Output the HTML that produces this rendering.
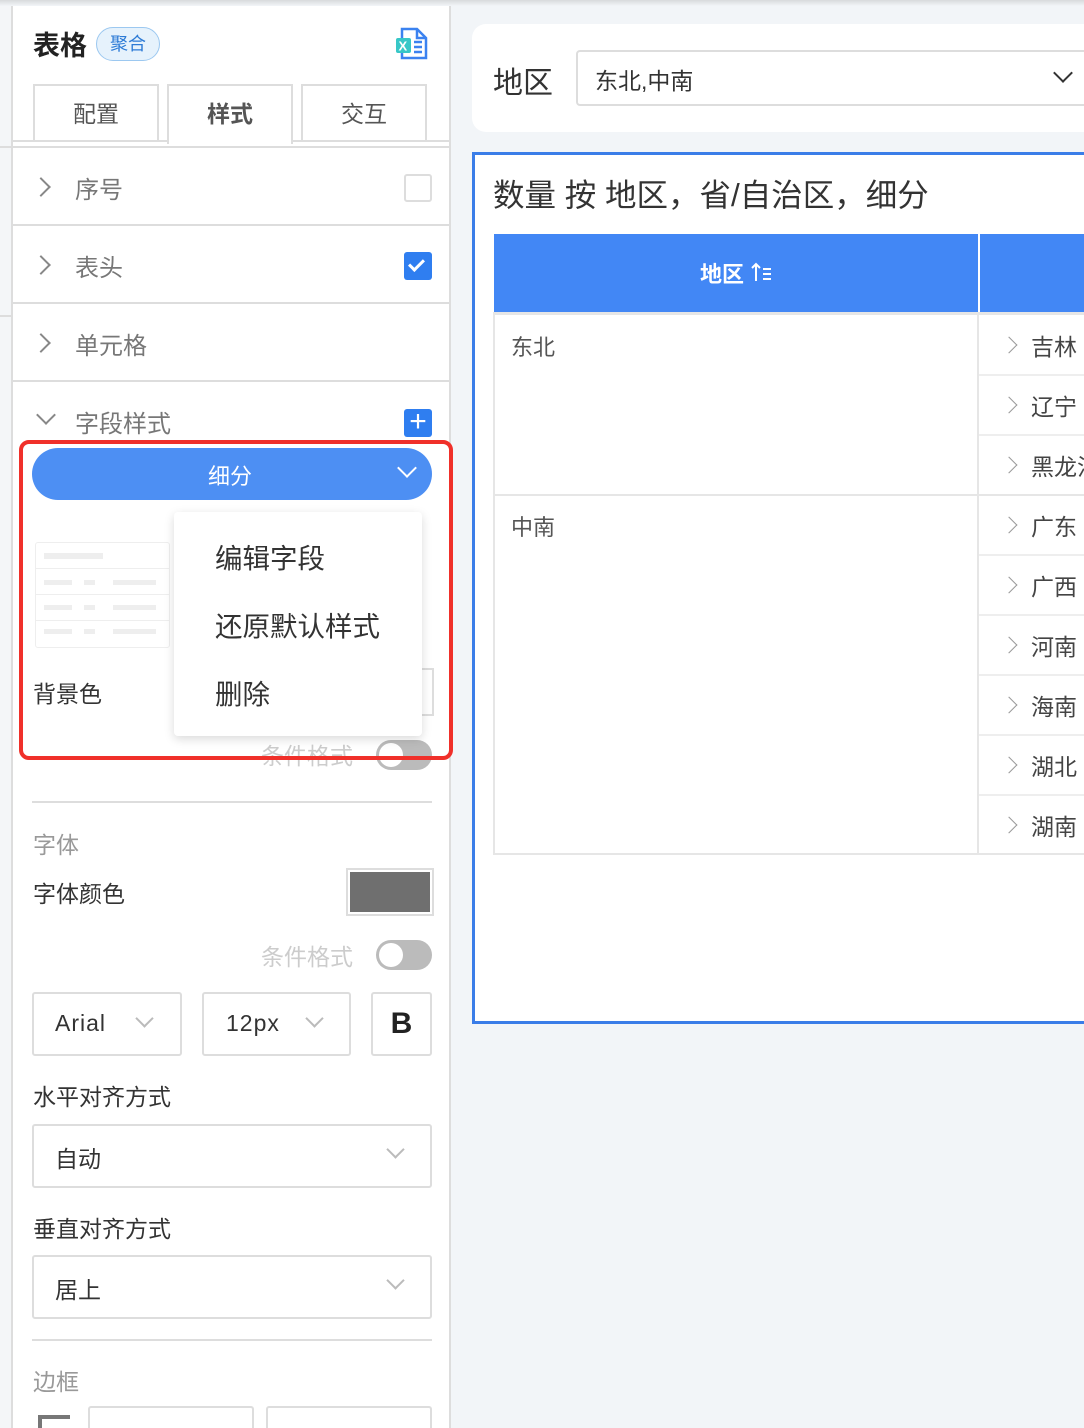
<!DOCTYPE html>
<html><head><meta charset="utf-8"><style>
*{box-sizing:border-box;margin:0;padding:0}
html,body{width:1084px;height:1428px;overflow:hidden}
body{background:#f2f5f8;font-family:"Liberation Sans","Noto Sans CJK SC",sans-serif;position:relative;color:#333}
.a{position:absolute}
.t{position:absolute;white-space:nowrap}
.chev{position:absolute;width:14px;height:14px;border-right:2px solid #888;border-bottom:2px solid #888}
.sc{position:absolute;left:1003px;width:12px;height:12px;border-right:1.5px solid #999;border-bottom:1.5px solid #999;transform:rotate(-45deg)}
.st{position:absolute;left:1031px;font-size:23px;color:#444;white-space:nowrap}
</style></head><body>
<div class="a" style="left:0;top:0;width:11px;height:1428px;background:#f4f6f8"></div>
<div class="a" style="left:0;top:146px;width:11px;height:2px;background:#ddd"></div>
<div class="a" style="left:0;top:315px;width:11px;height:2px;background:#ddd"></div>
<div class="a" style="left:11px;top:0;width:440px;height:1428px;background:#fff;border-left:2px solid #ddd;border-right:2px solid #ddd"></div>
<div class="a" style="left:0;top:0;width:1084px;height:6px;background:linear-gradient(#d8dadc,#f2f5f8)"></div>
<div class="t" style="left:33px;top:24px;font-size:27px;font-weight:bold;color:#222">表格</div>
<div class="t" style="left:96px;top:27px;width:64px;height:34px;border:1px solid #9cc8f0;background:#e6f2fc;border-radius:17px;color:#2d7bd6;font-size:18px;line-height:32px;text-align:center">聚合</div>
<svg class="a" style="left:394px;top:27px" width="36" height="34" viewBox="0 0 36 34"><path d="M8 2h15l9 9v20H8z" fill="#fff" stroke="#3b82f0" stroke-width="2.5"/><path d="M23 2v9h9" fill="none" stroke="#3b82f0" stroke-width="2.5"/><rect x="2" y="11" width="15" height="15" rx="2" fill="#37c7c7"/><text x="4.5" y="23.5" font-size="13" font-weight="bold" fill="#fff" font-family="Liberation Sans">X</text><path d="M20 15h8M20 20h8M20 25h8" stroke="#3b82f0" stroke-width="2.5"/></svg>
<div class="a" style="left:11px;top:140px;width:440px;height:8px;border-top:2px solid #ddd;border-bottom:2px solid #ddd"></div>
<div class="t" style="left:33px;top:84px;width:126px;height:56px;border:2px solid #ddd;border-bottom:none;background:#fff;font-size:23px;color:#555;text-align:center;line-height:56px">配置</div>
<div class="t" style="left:167px;top:84px;width:126px;height:60px;border:2px solid #ddd;border-bottom:none;background:#fff;font-size:23px;color:#555;font-weight:bold;text-align:center;line-height:56px">样式</div>
<div class="t" style="left:301px;top:84px;width:126px;height:56px;border:2px solid #ddd;border-bottom:none;background:#fff;font-size:23px;color:#555;text-align:center;line-height:56px">交互</div>
<div class="chev" style="left:34px;top:180px;transform:rotate(-45deg)"></div>
<div class="t" style="left:75px;top:170px;font-size:24px;color:#777">序号</div>
<div class="a" style="left:404px;top:174px;width:28px;height:28px;border:2px solid #ddd;border-radius:3px"></div>
<div class="a" style="left:11px;top:224px;width:440px;height:2px;background:#ddd"></div>
<div class="chev" style="left:34px;top:258px;transform:rotate(-45deg)"></div>
<div class="t" style="left:75px;top:248px;font-size:24px;color:#777">表头</div>
<div class="a" style="left:404px;top:252px;width:28px;height:28px;background:#2f7ef0;border-radius:3px"></div>
<div class="a" style="left:412px;top:256px;width:9px;height:15px;border-right:3px solid #fff;border-bottom:3px solid #fff;transform:rotate(45deg)"></div>
<div class="a" style="left:11px;top:302px;width:440px;height:2px;background:#ddd"></div>
<div class="chev" style="left:34px;top:336px;transform:rotate(-45deg)"></div>
<div class="t" style="left:75px;top:326px;font-size:24px;color:#777">单元格</div>
<div class="a" style="left:11px;top:380px;width:440px;height:2px;background:#ddd"></div>
<div class="chev" style="left:39px;top:408px;transform:rotate(45deg)"></div>
<div class="t" style="left:75px;top:404px;font-size:24px;color:#777">字段样式</div>
<div class="a" style="left:404px;top:409px;width:28px;height:28px;background:#2f7ef0;border-radius:3px;color:#fff;font-size:30px;line-height:26px;text-align:center;font-weight:300">+</div>
<div class="a" style="left:32px;top:448px;width:400px;height:52px;background:#4d8ff3;border-radius:26px"></div>
<div class="t" style="left:208px;top:459px;font-size:22px;color:#fff">细分</div>
<div class="a" style="left:400px;top:461px;width:14px;height:14px;border-right:2px solid #fff;border-bottom:2px solid #fff;transform:rotate(45deg)"></div>
<div class="a" style="left:35px;top:542px;width:135px;height:106px;border:1px solid #eee;border-radius:3px"></div>
<div class="a" style="left:44px;top:553px;width:59px;height:6px;background:#eee"></div>
<div class="a" style="left:35px;top:568px;width:135px;height:1px;background:#eee"></div>
<div class="a" style="left:35px;top:594px;width:135px;height:1px;background:#eee"></div>
<div class="a" style="left:35px;top:620px;width:135px;height:1px;background:#eee"></div>
<div class="a" style="left:44px;top:580px;width:28px;height:5px;background:#eee;box-shadow:0 25px 0 #eee,0 49px 0 #eee"></div>
<div class="a" style="left:84px;top:580px;width:11px;height:5px;background:#eee;box-shadow:0 25px 0 #eee,0 49px 0 #eee"></div>
<div class="a" style="left:113px;top:580px;width:43px;height:5px;background:#eee;box-shadow:0 25px 0 #eee,0 49px 0 #eee"></div>
<div class="t" style="left:33px;top:675px;font-size:23px;color:#333">背景色</div>
<div class="a" style="left:346px;top:668px;width:88px;height:48px;border:2px solid #ddd"></div>
<div class="t" style="left:261px;top:737px;font-size:23px;color:#ccc">条件格式</div>
<div class="a" style="left:376px;top:740px;width:56px;height:30px;border-radius:15px;background:#bbb"></div>
<div class="a" style="left:379px;top:743px;width:24px;height:24px;border-radius:12px;background:#fff"></div>
<div class="a" style="left:174px;top:512px;width:248px;height:224px;background:#fff;border-radius:4px;box-shadow:0 3px 10px rgba(0,0,0,.15)"></div>
<div class="t" style="left:215px;top:536px;font-size:27.5px;color:#333">编辑字段</div>
<div class="t" style="left:215px;top:604px;font-size:27.5px;color:#333">还原默认样式</div>
<div class="t" style="left:215px;top:672px;font-size:27.5px;color:#333">删除</div>
<div class="a" style="left:19px;top:440px;width:434px;height:320px;border:4px solid #f0302a;border-radius:10px"></div>
<div class="a" style="left:32px;top:801px;width:400px;height:2px;background:#ddd"></div>
<div class="t" style="left:33px;top:826px;font-size:23px;color:#999">字体</div>
<div class="t" style="left:33px;top:875px;font-size:23px;color:#333">字体颜色</div>
<div class="a" style="left:346px;top:868px;width:88px;height:48px;border:2px solid #ddd;padding:2px"><div style="width:100%;height:100%;background:#6f6f6f"></div></div>
<div class="t" style="left:261px;top:938px;font-size:23px;color:#ccc">条件格式</div>
<div class="a" style="left:376px;top:940px;width:56px;height:30px;border-radius:15px;background:#bbb"></div>
<div class="a" style="left:379px;top:943px;width:24px;height:24px;border-radius:12px;background:#fff"></div>
<div class="a" style="left:32px;top:992px;width:150px;height:64px;border:2px solid #ddd;border-radius:3px"></div>
<div class="t" style="left:55px;top:1010px;font-size:23px;color:#333;letter-spacing:1px">Arial</div>
<div class="a" style="left:138px;top:1012px;width:13px;height:13px;border-right:2px solid #bbb;border-bottom:2px solid #bbb;transform:rotate(45deg)"></div>
<div class="a" style="left:202px;top:992px;width:149px;height:64px;border:2px solid #ddd;border-radius:3px"></div>
<div class="t" style="left:226px;top:1010px;font-size:23px;color:#333;letter-spacing:1px">12px</div>
<div class="a" style="left:308px;top:1012px;width:13px;height:13px;border-right:2px solid #bbb;border-bottom:2px solid #bbb;transform:rotate(45deg)"></div>
<div class="a" style="left:371px;top:992px;width:61px;height:64px;border:2px solid #ddd;border-radius:3px;text-align:center;font-size:30px;font-weight:bold;line-height:60px;color:#222">B</div>
<div class="t" style="left:33px;top:1078px;font-size:23px;color:#333">水平对齐方式</div>
<div class="a" style="left:32px;top:1124px;width:400px;height:64px;border:2px solid #ddd;border-radius:3px"></div>
<div class="t" style="left:55px;top:1140px;font-size:23px;color:#333">自动</div>
<div class="a" style="left:389px;top:1143px;width:13px;height:13px;border-right:2px solid #bbb;border-bottom:2px solid #bbb;transform:rotate(45deg)"></div>
<div class="t" style="left:33px;top:1210px;font-size:23px;color:#333">垂直对齐方式</div>
<div class="a" style="left:32px;top:1255px;width:400px;height:64px;border:2px solid #ddd;border-radius:3px"></div>
<div class="t" style="left:55px;top:1271px;font-size:23px;color:#333">居上</div>
<div class="a" style="left:389px;top:1274px;width:13px;height:13px;border-right:2px solid #bbb;border-bottom:2px solid #bbb;transform:rotate(45deg)"></div>
<div class="a" style="left:32px;top:1339px;width:400px;height:2px;background:#ddd"></div>
<div class="t" style="left:33px;top:1363px;font-size:23px;color:#999">边框</div>
<div class="a" style="left:38px;top:1415px;width:32px;height:13px;border-left:4px solid #777;border-top:4px solid #777"></div>
<div class="a" style="left:88px;top:1406px;width:166px;height:30px;border:2px solid #ddd;border-bottom:none;border-radius:3px 3px 0 0"></div>
<div class="a" style="left:266px;top:1406px;width:166px;height:30px;border:2px solid #ddd;border-bottom:none;border-radius:3px 3px 0 0"></div>
<div class="a" style="left:472px;top:24px;width:640px;height:108px;background:#fff;border-radius:14px"></div>
<div class="t" style="left:493px;top:58px;font-size:30px;color:#333">地区</div>
<div class="a" style="left:576px;top:50px;width:530px;height:56px;border:2px solid #ddd;border-radius:4px"></div>
<div class="t" style="left:595px;top:62px;font-size:23px;color:#333">东北,中南</div>
<div class="a" style="left:1056px;top:66px;width:14px;height:14px;border-right:2px solid #333;border-bottom:2px solid #333;transform:rotate(45deg)"></div>
<div class="a" style="left:472px;top:152px;width:640px;height:872px;background:#fff;border:3px solid #3a7de8"></div>
<div class="t" style="left:493px;top:170px;font-size:31.5px;color:#333">数量 按 地区，省/自治区，细分</div>
<div class="a" style="left:494px;top:234px;width:484px;height:78px;background:#4287f5"></div>
<div class="a" style="left:980px;top:234px;width:110px;height:78px;background:#4287f5"></div>
<div class="t" style="left:700px;top:257px;font-size:22px;color:#fff;font-weight:bold">地区</div>
<svg class="a" style="left:751px;top:261px" width="22" height="22" viewBox="0 0 22 22"><path d="M5 20V3M1 7l4-4 4 4" fill="none" stroke="#fff" stroke-width="2"/><path d="M12 8h8M12 13h8M12 18h8" stroke="#fff" stroke-width="2"/></svg>
<div class="a" style="left:493px;top:312px;width:600px;height:543px;border:2px solid #e6e6e6;border-top:3px solid #e6e6e6"></div>
<div class="a" style="left:977px;top:312px;width:2px;height:543px;background:#e6e6e6"></div>
<div class="a" style="left:493px;top:494px;width:486px;height:2px;background:#e6e6e6"></div>
<div class="t" style="left:511px;top:330px;font-size:22px;color:#555">东北</div>
<div class="t" style="left:511px;top:510px;font-size:22px;color:#555">中南</div>
<div class="a" style="left:979px;top:374px;width:110px;height:2px;background:#eee;box-shadow:0 60px 0 #eee,0 120px 0 #e6e6e6,0 180px 0 #eee,0 240px 0 #eee,0 300px 0 #eee,0 360px 0 #eee,0 420px 0 #eee"></div>
<div class="sc" style="top:339px"></div><div class="st" style="top:328px">吉林</div>
<div class="sc" style="top:399px"></div><div class="st" style="top:388px">辽宁</div>
<div class="sc" style="top:459px"></div><div class="st" style="top:448px">黑龙江</div>
<div class="sc" style="top:519px"></div><div class="st" style="top:508px">广东</div>
<div class="sc" style="top:579px"></div><div class="st" style="top:568px">广西</div>
<div class="sc" style="top:639px"></div><div class="st" style="top:628px">河南</div>
<div class="sc" style="top:699px"></div><div class="st" style="top:688px">海南</div>
<div class="sc" style="top:759px"></div><div class="st" style="top:748px">湖北</div>
<div class="sc" style="top:819px"></div><div class="st" style="top:808px">湖南</div>
</body></html>
